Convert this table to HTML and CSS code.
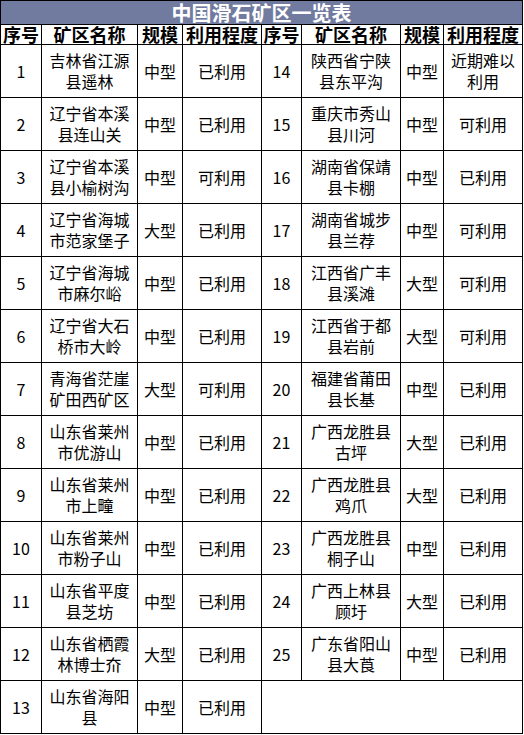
FILE: index.html
```html
<!DOCTYPE html>
<html lang="zh">
<head>
<meta charset="utf-8">
<title>中国滑石矿区一览表</title>
<link rel="stylesheet" href="styles.css">
</head>
<body>
<table class="sheet">
  <colgroup>
    <col class="c-no"><col class="c-name"><col class="c-size"><col class="c-use">
    <col class="c-no2"><col class="c-name2"><col class="c-size2"><col class="c-use2">
  </colgroup>
  <thead>
    <tr class="title-row"><th colspan="8" class="title">中国滑石矿区一览表</th></tr>
    <tr class="head-row">
      <th>序号</th><th>矿区名称</th><th>规模</th><th>利用程度</th>
      <th>序号</th><th>矿区名称</th><th>规模</th><th>利用程度</th>
    </tr>
  </thead>
  <tbody>
    <tr><td>1</td><td>吉林省江源<br>县遥林</td><td>中型</td><td>已利用</td><td>14</td><td>陕西省宁陕<br>县东平沟</td><td>中型</td><td>近期难以<br>利用</td></tr>
    <tr><td>2</td><td>辽宁省本溪<br>县连山关</td><td>中型</td><td>已利用</td><td>15</td><td>重庆市秀山<br>县川河</td><td>中型</td><td>可利用</td></tr>
    <tr><td>3</td><td>辽宁省本溪<br>县小榆树沟</td><td>中型</td><td>可利用</td><td>16</td><td>湖南省保靖<br>县卡棚</td><td>中型</td><td>已利用</td></tr>
    <tr><td>4</td><td>辽宁省海城<br>市范家堡子</td><td>大型</td><td>已利用</td><td>17</td><td>湖南省城步<br>县兰荐</td><td>中型</td><td>可利用</td></tr>
    <tr><td>5</td><td>辽宁省海城<br>市麻尔峪</td><td>中型</td><td>已利用</td><td>18</td><td>江西省广丰<br>县溪滩</td><td>大型</td><td>可利用</td></tr>
    <tr><td>6</td><td>辽宁省大石<br>桥市大岭</td><td>中型</td><td>已利用</td><td>19</td><td>江西省于都<br>县岩前</td><td>大型</td><td>可利用</td></tr>
    <tr><td>7</td><td>青海省茫崖<br>矿田西矿区</td><td>大型</td><td>可利用</td><td>20</td><td>福建省莆田<br>县长基</td><td>中型</td><td>已利用</td></tr>
    <tr><td>8</td><td>山东省莱州<br>市优游山</td><td>中型</td><td>已利用</td><td>21</td><td>广西龙胜县<br>古坪</td><td>大型</td><td>已利用</td></tr>
    <tr><td>9</td><td>山东省莱州<br>市上疃</td><td>中型</td><td>已利用</td><td>22</td><td>广西龙胜县<br>鸡爪</td><td>大型</td><td>已利用</td></tr>
    <tr><td>10</td><td>山东省莱州<br>市粉子山</td><td>中型</td><td>已利用</td><td>23</td><td>广西龙胜县<br>桐子山</td><td>中型</td><td>已利用</td></tr>
    <tr><td>11</td><td>山东省平度<br>县芝坊</td><td>中型</td><td>已利用</td><td>24</td><td>广西上林县<br>顾圩</td><td>大型</td><td>已利用</td></tr>
    <tr><td>12</td><td>山东省栖霞<br>林博士夼</td><td>大型</td><td>已利用</td><td>25</td><td>广东省阳山<br>县大莨</td><td>中型</td><td>已利用</td></tr>
    <tr><td>13</td><td>山东省海阳<br>县</td><td>中型</td><td>已利用</td><td colspan="4"></td></tr>
  </tbody>
</table>
</body>
</html>
```
FILE: styles.css
```css
html, body {
  margin: 0;
  padding: 0;
  background: #ffffff;
}

.sheet {
  border-collapse: collapse;
  table-layout: fixed;
  width: 522px;
  font-family: "Noto Sans CJK SC", "Noto Sans", sans-serif;
  color: #000000;
}

.c-no { width: 41px; }
.c-name { width: 96px; }
.c-size { width: 45px; }
.c-use { width: 79px; }
.c-no2 { width: 40px; }
.c-name2 { width: 99px; }
.c-size2 { width: 43px; }
.c-use2 { width: 79px; }

.sheet th,
.sheet td {
  border: 1px solid #000000;
  padding: 0;
  text-align: center;
  vertical-align: middle;
  white-space: nowrap;
}

.title-row .title {
  height: 23px;
  background: #717b9f;
  color: #ffffff;
  font-size: 20px;
  font-weight: bold;
  line-height: 23px;
}

.head-row th {
  height: 19px;
  font-size: 18px;
  font-weight: bold;
  line-height: 19px;
}

.sheet tbody td {
  height: 52px;
  font-size: 16px;
  line-height: 21px;
}
```
